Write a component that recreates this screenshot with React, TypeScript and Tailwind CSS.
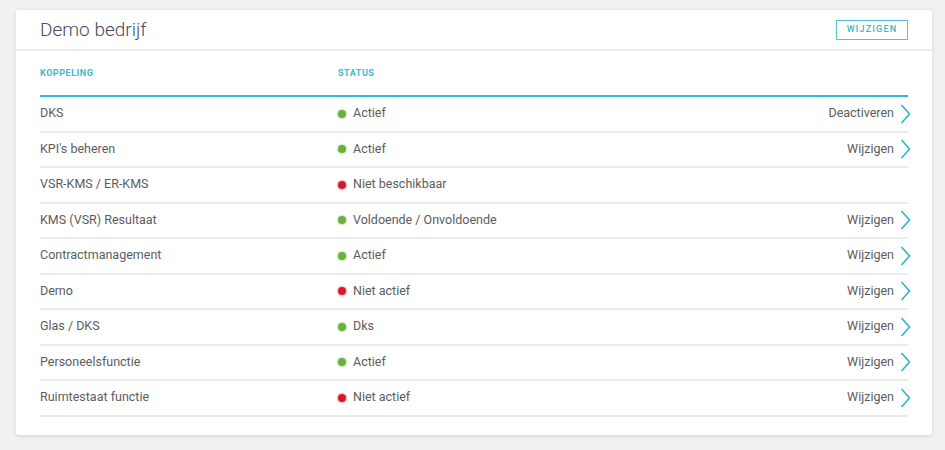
import React from 'react';

type Row = { name: string; status: string; ok: boolean; action?: string };

const ROWS: Row[] = [
  { name: 'DKS', status: 'Actief', ok: true, action: 'Deactiveren' },
  { name: "KPI's beheren", status: 'Actief', ok: true, action: 'Wijzigen' },
  { name: 'VSR-KMS / ER-KMS', status: 'Niet beschikbaar', ok: false },
  { name: 'KMS (VSR) Resultaat', status: 'Voldoende / Onvoldoende', ok: true, action: 'Wijzigen' },
  { name: 'Contractmanagement', status: 'Actief', ok: true, action: 'Wijzigen' },
  { name: 'Demo', status: 'Niet actief', ok: false, action: 'Wijzigen' },
  { name: 'Glas / DKS', status: 'Dks', ok: true, action: 'Wijzigen' },
  { name: 'Personeelsfunctie', status: 'Actief', ok: true, action: 'Wijzigen' },
  { name: 'Ruimtestaat functie', status: 'Niet actief', ok: false, action: 'Wijzigen' },
];

function Chevron() {
  return (
    <svg width="11" height="20" viewBox="0 0 11 20" className="ml-[6px] -mr-[3px]">
      <path d="M1.5 1 L9.5 10 L1.5 19" fill="none" stroke="#2db4cd" strokeWidth="1.6" />
    </svg>
  );
}

export default function App() {
  return (
    <div className="min-h-[450px] bg-[#f1f1f1] pt-[10px] pl-4 pr-[13px] pb-[14px] font-['Roboto',sans-serif]">
      <div className="bg-white rounded-[3px] shadow-[0_1px_4px_rgba(0,0,0,0.12)]">
        {/* Header */}
        <div className="h-[41px] flex items-center justify-between px-6 border-b-2 border-[#ececec]">
          <h1 className="text-[19px] font-light text-[#4a4a5c] leading-none">Demo bedrijf</h1>
          <button className="h-[20px] w-[72px] border-[1.5px] border-[#55c3d6] text-[#3bb3c9] text-[9px] font-medium tracking-[0.13em] leading-none">
            WIJZIGEN
          </button>
        </div>

        <div className="px-6 pb-[18px]">
          {/* Table header */}
          <div className="flex items-center h-[46px] pt-[1px] border-b-2 border-[#2ebbd3]">
            <div className="w-[298px] text-[9px] font-bold tracking-[0.06em] text-[#3db8d0]">KOPPELING</div>
            <div className="text-[9px] font-bold tracking-[0.06em] text-[#3db8d0]">STATUS</div>
          </div>

          {ROWS.map((r) => (
            <div key={r.name} className="flex items-center h-[35.5px] border-b-2 border-[#ececec] text-[12.5px] text-[#5c5c5c]">
              <div className="w-[298px]">{r.name}</div>
              <div className="flex items-center flex-1">
                <span
                  className={
                    r.ok
                      ? 'w-[8px] h-[8px] rounded-full bg-[#67b13c] shadow-[0_0_0_1.5px_#dcefd0] mr-[7px]'
                      : 'w-[8px] h-[8px] rounded-full bg-[#d8192c] shadow-[0_0_0_1.5px_#f6d0d4] mr-[7px]'
                  }
                />
                <span>{r.status}</span>
              </div>
              {r.action && (
                <div className="flex items-center">
                  <span>{r.action}</span>
                  <Chevron />
                </div>
              )}
            </div>
          ))}
        </div>
      </div>
    </div>
  );
}
